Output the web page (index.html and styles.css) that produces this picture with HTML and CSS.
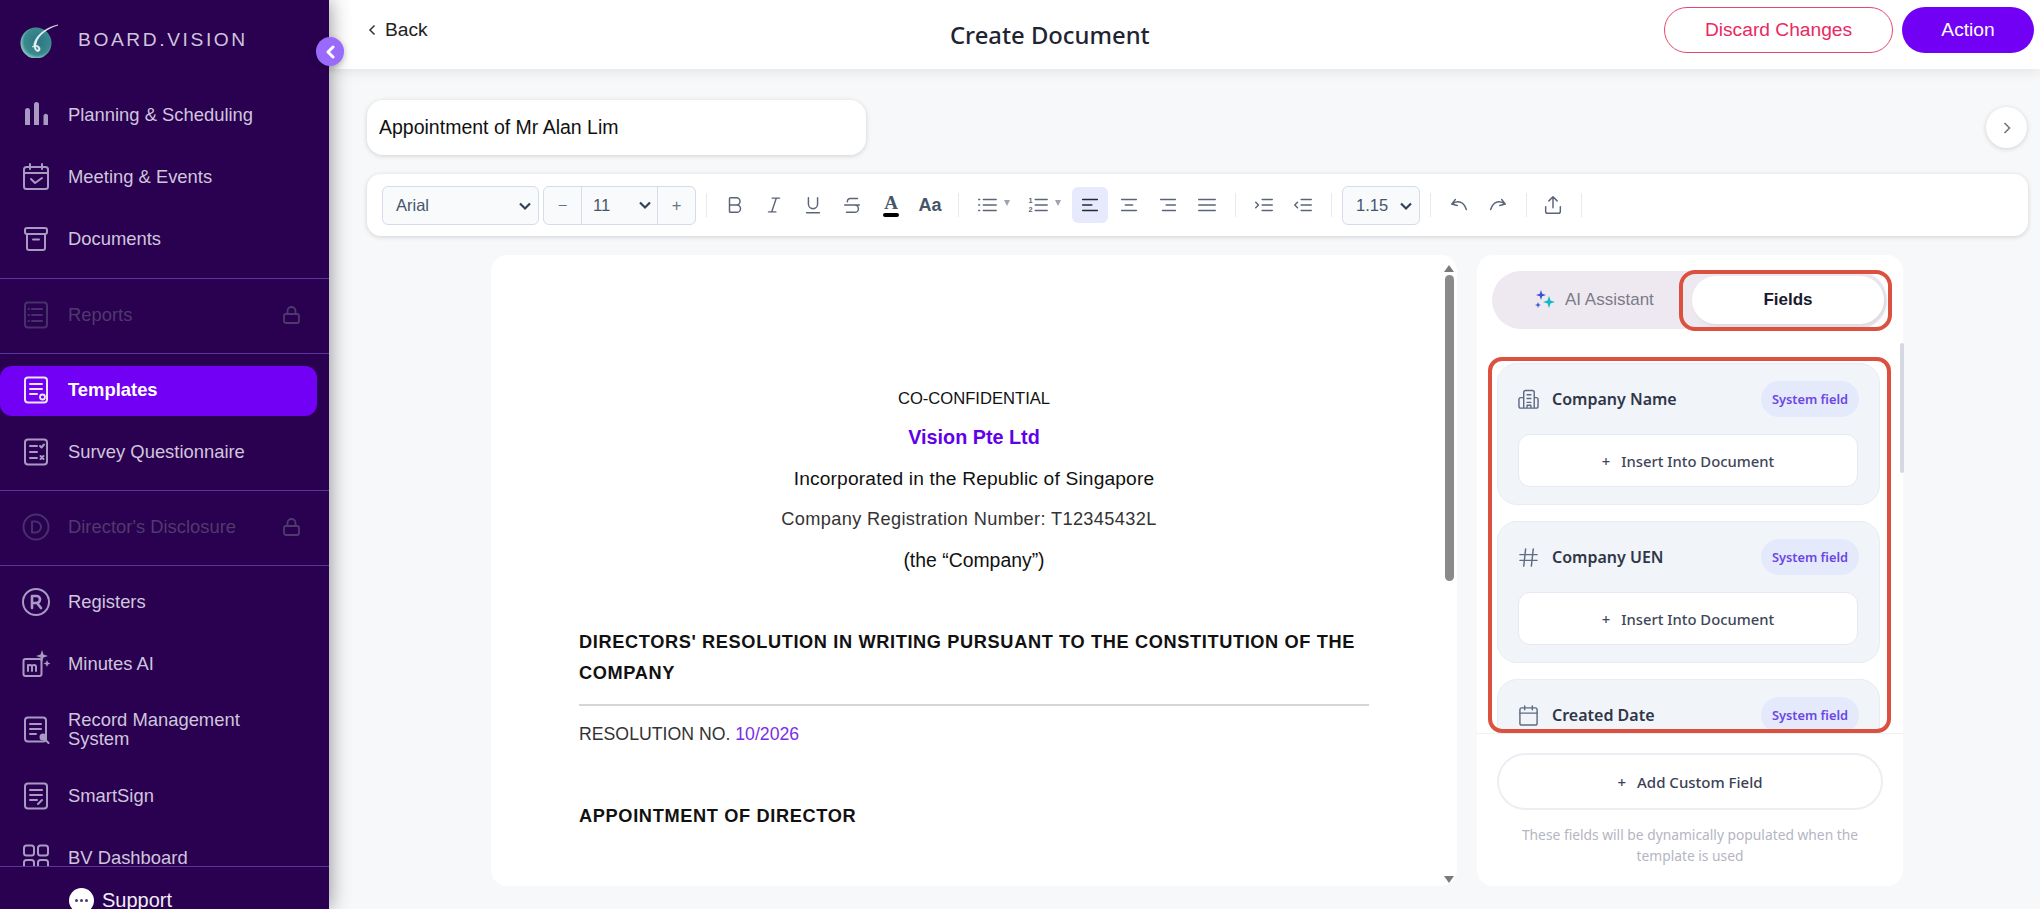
FILE: index.html
```html
<!DOCTYPE html>
<html lang="en">
<head>
    <meta charset="UTF-8">
    <meta name="viewport" content="width=device-width, initial-scale=1.0">
    <title>Create Document</title>
    <link rel="stylesheet" href="styles.css">
</head>
<body>
    <aside class="sidebar">
        <div class="brand">
            <svg class="brand-logo" viewBox="0 0 40 36" width="40" height="36">
                <defs>
                    <radialGradient id="logo-fill" cx="0.55" cy="0.45" r="0.6">
                        <stop offset="0" stop-color="#2c7484"/>
                        <stop offset="0.72" stop-color="#3a8a8e"/>
                        <stop offset="1" stop-color="#a4dccf"/>
                    </radialGradient>
                </defs>
                <circle cx="16" cy="21" r="15.500" fill="url(#logo-fill)"/>
                <path d="M38 3C28 5 18 11 14.500 20c-1.500 4 0 9 3 9.500 2.500.3 3.500-3 1.500-5-2-1.800-5-1.200-7 .5 1.500-.8 4-1.300 5.500 0 1.500 1.500 1 3.200-.2 3-1.500-.3-2-3.500-1-7C18 13 28 6 38 3z" fill="#eaf4f3" stroke="#eaf4f3" stroke-width="0.6"/>
            </svg>
            <span class="brand-name">BOARD.VISION</span>
        </div>
        <nav class="nav">
            <div class="nav-group">
                <a class="nav-item">
                    <svg class="nav-icon" viewBox="0 0 28 28"><path class="fill" d="M3 9.500a2.500 2.500 0 0 1 5 0V24H3zM12 3.500a2.500 2.500 0 0 1 5 0V24h-5zM21.500 14.500a2.300 2.300 0 0 1 4.500 0V24h-4.500z"/></svg>
                    <span>Planning &amp; Scheduling</span>
                </a>
                <a class="nav-item">
                    <svg class="nav-icon" viewBox="0 0 28 28"><rect x="2" y="4" width="24" height="22" rx="2.500"/><path d="M2 10h24M8 1v5M20 1v5M9 16l4 4 7-5"/></svg>
                    <span>Meeting &amp; Events</span>
                </a>
                <a class="nav-item">
                    <svg class="nav-icon" viewBox="0 0 28 28"><rect x="3" y="3" width="22" height="6" rx="2"/><path d="M5 9v14a2 2 0 0 0 2 2h14a2 2 0 0 0 2-2V9M11 14.500h6"/></svg>
                    <span>Documents</span>
                </a>
            </div>
            <div class="nav-group">
                <a class="nav-item locked">
                    <svg class="nav-icon" viewBox="0 0 28 28"><rect x="3" y="1.500" width="22" height="25" rx="3"/><path d="M10 8h10M10 14h10M10 20h10M6.500 8h.5M6.500 14h.5M6.500 20h.5"/></svg>
                    <span>Reports</span>
                    <svg class="lock-icon" viewBox="0 0 18 20"><rect x="1" y="9" width="15" height="9" rx="2"/><path d="M4.500 9V6a4 4 0 0 1 8 0v3"/></svg>
                </a>
            </div>
            <div class="nav-group">
                <a class="nav-item active">
                    <svg class="nav-icon" viewBox="0 0 28 28"><rect x="3" y="1.500" width="22" height="25" rx="3"/><path d="M8 8h12M8 13h12M8 18h7"/><circle class="dot" cx="20.500" cy="21" r="2.500"/></svg>
                    <span>Templates</span>
                </a>
                <a class="nav-item">
                    <svg class="nav-icon" viewBox="0 0 28 28"><rect x="3" y="1.500" width="22" height="25" rx="3"/><path d="M8 8h7M8 14h7M8 20h7M18 8l1.500 1.500L22 6.500M18.500 18l3 3M21.500 18l-3 3"/></svg>
                    <span>Survey Questionnaire</span>
                </a>
            </div>
            <div class="nav-group">
                <a class="nav-item locked">
                    <svg class="nav-icon" viewBox="0 0 28 28"><circle cx="14" cy="14" r="12.500"/><path d="M10 8.500h3.500a5.500 5.500 0 0 1 0 11H10z"/></svg>
                    <span>Director's Disclosure</span>
                    <svg class="lock-icon" viewBox="0 0 18 20"><rect x="1" y="9" width="15" height="9" rx="2"/><path d="M4.500 9V6a4 4 0 0 1 8 0v3"/></svg>
                </a>
            </div>
            <div class="nav-group last">
                <a class="nav-item">
                    <svg class="nav-icon" viewBox="0 0 28 28"><circle cx="14" cy="14" r="13"/><path class="thick" d="M10 20V8h4.500a3.500 3.500 0 0 1 0 7H10M15 15l4 5"/></svg>
                    <span>Registers</span>
                </a>
                <a class="nav-item">
                    <svg class="nav-icon" viewBox="0 0 28 28"><rect x="1.500" y="9" width="18" height="17" rx="2"/><path d="M6 21v-6M6 16.500c0-2 4-2 4 0V21M10 16.500c0-2 4-2 4 0V21"/><path class="fill" d="M20 0l1.500 4.500L26 6l-4.500 1.500L20 12l-1.500-4.500L14 6l4.500-1.500zM25 10l1 2.500 2.500 1-2.500 1-1 2.500-1-2.500-2.500-1 2.500-1z"/></svg>
                    <span>Minutes AI</span>
                </a>
                <a class="nav-item tall">
                    <svg class="nav-icon" viewBox="0 0 28 28"><rect x="3" y="1.500" width="21" height="24" rx="3"/><path d="M8 8h11M8 13h11M8 18h6"/><circle class="fill" cx="21" cy="21" r="3.500"/><path d="M23.500 24l3 3"/></svg>
                    <span>Record Management System</span>
                </a>
                <a class="nav-item">
                    <svg class="nav-icon" viewBox="0 0 28 28"><rect x="3" y="1.500" width="22" height="25" rx="3"/><path d="M8 8h12M8 13h12M8 18h7M16 22l4-4"/></svg>
                    <span>SmartSign</span>
                </a>
                <a class="nav-item">
                    <svg class="nav-icon" viewBox="0 0 28 28"><rect x="2" y="1.500" width="10" height="10" rx="2.500"/><rect x="16" y="1.500" width="10" height="10" rx="2.500"/><rect x="2" y="16" width="10" height="10" rx="2.500"/><rect x="16" y="16" width="10" height="10" rx="2.500"/></svg>
                    <span>BV Dashboard</span>
                </a>
            </div>
        </nav>
        <div class="support">
            <span class="support-bubble"><i></i><i></i><i></i></span>
            <span class="support-label">Support</span>
        </div>
    </aside>

    <button class="collapse-btn">
        <svg viewBox="0 0 12 14" width="12" height="14"><path d="M9 2L4 7l5 5" fill="none" stroke="#fff" stroke-width="3" stroke-linecap="round" stroke-linejoin="round"/></svg>
    </button>

    <main class="main">
        <header class="topbar">
            <a class="back-link">
                <svg viewBox="0 0 10 14" width="10" height="14"><path d="M7.500 2.500L3 7l4.500 4.500" fill="none" stroke="#333" stroke-width="1.500"/></svg>
                Back
            </a>
            <h1 class="page-title">Create Document</h1>
            <div class="topbar-actions">
                <button class="btn btn-outline">Discard Changes</button>
                <button class="btn btn-primary">Action</button>
            </div>
        </header>

        <div class="content">
            <div class="title-row">
                <input class="title-input" type="text" value="Appointment of Mr Alan Lim">
                <button class="round-btn">
                    <svg viewBox="0 0 10 14" width="10" height="14"><path d="M2.500 2l5 5-5 5" fill="none" stroke="#6b7280" stroke-width="1.500"/></svg>
                </button>
            </div>

            <div class="toolbar">
                <div class="tb-select font-family">Arial
                    <svg class="tb-chevron" viewBox="0 0 14 10"><path d="M2 2.500l5 5 5-5"/></svg>
                </div>
                <div class="size-group">
                    <span class="size-step">−</span>
                    <span class="size-value">11
                        <svg class="tb-chevron" viewBox="0 0 14 10"><path d="M2 2.500l5 5 5-5"/></svg>
                    </span>
                    <span class="size-step">+</span>
                </div>
                <span class="tb-sep"></span>
                <button class="tb-btn"><svg viewBox="0 0 24 24"><path d="M6 12h8a4 4 0 0 1 0 8H7a1 1 0 0 1-1-1V5a1 1 0 0 1 1-1h6.500a4 4 0 0 1 0 8"/></svg></button>
                <button class="tb-btn"><svg viewBox="0 0 24 24"><path d="M10 4.500h8M6 19.500h8M14.500 4.500l-5 15"/></svg></button>
                <button class="tb-btn"><svg viewBox="0 0 24 24"><path d="M7 4v7a5 5 0 0 0 10 0V4M5 20.500h14"/></svg></button>
                <button class="tb-btn"><svg viewBox="0 0 24 24"><path d="M18 5H10a3 3 0 0 0-3 3.500M4 12h16M15 12a4 4 0 0 1 0 8H6"/></svg></button>
                <button class="tb-btn color-btn"><span class="color-a">A</span><i class="color-bar"></i></button>
                <button class="tb-btn case-btn">Aa</button>
                <span class="tb-sep"></span>
                <button class="tb-btn list-btn"><svg viewBox="0 0 24 24"><path d="M8 6h14M8 12h14M8 18h14M3 6h1M3 12h1M3 18h1"/></svg><i class="tb-caret"></i></button>
                <button class="tb-btn list-btn"><svg viewBox="0 0 24 24"><path d="M9 6h13M9 12h13M9 18h13"/><text x="1.500" y="10">1</text><text x="1.500" y="20">2</text></svg><i class="tb-caret"></i></button>
                <button class="tb-btn selected"><svg viewBox="0 0 24 24"><path d="M4 6h16M4 12h10M4 18h16"/></svg></button>
                <button class="tb-btn"><svg viewBox="0 0 24 24"><path d="M4 6h16M8 12h8M4 18h16"/></svg></button>
                <button class="tb-btn"><svg viewBox="0 0 24 24"><path d="M4 6h16M10 12h10M6 18h14"/></svg></button>
                <button class="tb-btn"><svg viewBox="0 0 24 24"><path d="M3 6h18M3 12h18M3 18h18"/></svg></button>
                <span class="tb-sep"></span>
                <button class="tb-btn"><svg viewBox="0 0 24 24"><path d="M10 6h11M10 12h11M10 18h11M3 9l3 3-3 3"/></svg></button>
                <button class="tb-btn"><svg viewBox="0 0 24 24"><path d="M10 6h11M10 12h11M10 18h11M6 9l-3 3 3 3"/></svg></button>
                <span class="tb-sep"></span>
                <div class="tb-select line-height">1.15
                    <svg class="tb-chevron" viewBox="0 0 14 10"><path d="M2 2.500l5 5 5-5"/></svg>
                </div>
                <span class="tb-sep"></span>
                <button class="tb-btn"><svg viewBox="0 0 24 24"><path d="M8 6L4 11l6 1.500M4.500 11C9 7 17 7 20 17"/></svg></button>
                <button class="tb-btn"><svg viewBox="0 0 24 24"><path d="M16 6l4 5-6 1.500M19.500 11C15 7 7 7 4 17"/></svg></button>
                <span class="tb-sep tight"></span>
                <button class="tb-btn"><svg viewBox="0 0 24 24"><path d="M12 15V3M7.500 7.500L12 3l4.500 4.500M4 14v5a2 2 0 0 0 2 2h12a2 2 0 0 0 2-2v-5"/></svg></button>
                <span class="tb-sep tight"></span>
            </div>

            <div class="workspace">
                <section class="doc-panel">
                    <div class="doc-page">
                        <p class="doc-center conf">CO-CONFIDENTIAL</p>
                        <p class="doc-center company">Vision Pte Ltd</p>
                        <p class="doc-center incorp">Incorporated in the Republic of Singapore</p>
                        <p class="doc-center reg">Company Registration Number: T12345432L</p>
                        <p class="doc-center the">(the “Company”)</p>
                        <h2 class="doc-heading">DIRECTORS' RESOLUTION IN WRITING PURSUANT TO THE CONSTITUTION OF THE COMPANY</h2>
                        <hr class="doc-rule">
                        <p class="doc-number">RESOLUTION NO. <span>10/2026</span></p>
                        <h3 class="doc-sub">APPOINTMENT OF DIRECTOR</h3>
                    </div>
                    <div class="doc-scroll">
                        <i class="arrow-up"></i>
                        <i class="doc-thumb"></i>
                        <i class="arrow-down"></i>
                    </div>
                </section>

                <section class="side-panel">
                    <div class="tabs">
                        <div class="tab">
                            <svg viewBox="0 0 20 20" width="20" height="20">
                                <path fill="#3b4fd8" d="M6 0l1.200 3.800L11 5 7.200 6.200 6 10 4.800 6.200 1 5l3.800-1.200z"/>
                                <path fill="#14b8c8" d="M14 6l1.500 4.500L20 12l-4.500 1.500L14 18l-1.500-4.500L8 12l4.500-1.500z"/>
                                <path fill="#3b4fd8" d="M3 12l.8 2.200L6 15l-2.200.8L3 18l-.8-2.200L0 15l2.200-.8z"/>
                            </svg>
                            AI Assistant
                        </div>
                        <div class="tab active">Fields</div>
                    </div>
                    <div class="field-list">
                        <div class="field-card">
                            <div class="field-head">
                                <svg class="field-icon" viewBox="0 0 22 22"><path d="M6 20V3.500A2 2 0 0 1 8 1.500h7a2 2 0 0 1 2 2V20M6 9H3a2 2 0 0 0-2 2v7a2 2 0 0 0 2 2h16a2 2 0 0 0 2-2v-7a2 2 0 0 0-2-2h-2M9.500 6h4M9.500 10h4M9.500 14h4M9.500 20v-3h4v3"/></svg>
                                <span class="field-name">Company Name</span>
                                <span class="field-badge">System field</span>
                            </div>
                            <button class="insert-btn"><b>+</b>Insert Into Document</button>
                        </div>
                        <div class="field-card">
                            <div class="field-head">
                                <svg class="field-icon" viewBox="0 0 22 22"><path d="M2 8h18M2 14h18M8 2L6 20M16 2l-2 18"/></svg>
                                <span class="field-name">Company UEN</span>
                                <span class="field-badge">System field</span>
                            </div>
                            <button class="insert-btn"><b>+</b>Insert Into Document</button>
                        </div>
                        <div class="field-card">
                            <div class="field-head">
                                <svg class="field-icon" viewBox="0 0 22 22"><rect x="2" y="3" width="18" height="18" rx="2"/><path d="M2 8.500h18M7 1v4M15 1v4"/></svg>
                                <span class="field-name">Created Date</span>
                                <span class="field-badge">System field</span>
                            </div>
                        </div>
                    </div>
                    <div class="side-footer">
                        <button class="add-btn"><b>+</b>Add Custom Field</button>
                        <p class="side-note">These fields will be dynamically populated when the template is used</p>
                    </div>
                    <i class="field-thumb"></i>
                    <i class="mark mark-tab"></i>
                    <i class="mark mark-list"></i>
                </section>
            </div>
        </div>
    </main>
</body>
</html>
```
FILE: styles.css
```css
* {
    box-sizing: border-box;
}

html, body {
    height: 100%;
}

body {
    margin: 0;
    display: flex;
    overflow: hidden;
    background-color: #f7f8fa;
    color: #111;
    font-family: "Liberation Sans", Arial, sans-serif;
}

button {
    font-family: inherit;
    border: none;
    background: none;
    cursor: pointer;
    padding: 0;
}

/* sidebar */
.sidebar {
    position: relative;
    z-index: 2;
    flex: none;
    width: 329px;
    height: 909px;
    display: flex;
    flex-direction: column;
    background-color: #2a0050;
    box-shadow: 0 0 20px rgba(0, 0, 0, 0.45);
}

.brand {
    flex: none;
    height: 79px;
    display: flex;
    align-items: flex-start;
    padding: 22px 0 0 20px;
    gap: 18px;
}

.brand-logo {
    flex: none;
}

.brand-name {
    margin-top: 7px;
    color: #cfc6dd;
    font-size: 19.2px;
    letter-spacing: 2.6px;
    line-height: 22px;
}

.nav {
    flex: 1;
    min-height: 0;
    overflow: hidden;
}

.nav-group {
    display: flex;
    flex-direction: column;
    gap: 12px;
    padding: 12px 0 12px;
    border-bottom: 1px solid #5b359e;
}

.nav-group:first-child {
    padding-bottom: 13px;
}

.nav-group.last {
    border-bottom: none;
}

.nav-item {
    height: 50px;
    width: 317px;
    display: flex;
    align-items: center;
    gap: 18px;
    padding: 0 16px 4px 22px;
    border-radius: 12px;
    color: #cfc6dd;
    font-size: 18.4px;
    line-height: 19px;
}

.nav-item.tall {
    height: 58px;
}

.nav-item span {
    width: 200px;
}

.nav-icon {
    flex: none;
    width: 28px;
    height: 28px;
    margin-top: 1px;
    fill: none;
    stroke: #a79bc3;
    stroke-width: 2;
    stroke-linecap: round;
    stroke-linejoin: round;
}

.nav-icon .fill {
    fill: #a79bc3;
    stroke: none;
}

.nav-icon .thick {
    stroke-width: 2.6;
}

.nav-icon .dot {
    fill: #7200f5;
    stroke-width: 1.8;
}

.nav-item.active {
    background-color: #7200f5;
    color: #fff;
    font-weight: bold;
}

.nav-item.active .nav-icon {
    stroke: #efe6fb;
}

.nav-item.locked {
    color: #4f3a6e;
}

.nav-item.locked .nav-icon {
    stroke: #46316a;
}

.nav-item.locked span {
    width: auto;
}

.lock-icon {
    flex: none;
    width: 18px;
    height: 20px;
    margin-left: auto;
    margin-top: 2px;
    fill: none;
    stroke: #4f3a6e;
    stroke-width: 1.8;
}

.support {
    flex: none;
    height: 43px;
    display: flex;
    gap: 8px;
    padding: 21px 0 0 69px;
    overflow: hidden;
    border-top: 1px solid #5b359e;
    color: #f1edf6;
    font-size: 20px;
}

.support-label {
    margin-top: 3px;
    line-height: 18px;
}

.support-bubble {
    flex: none;
    width: 25px;
    height: 25px;
    display: flex;
    align-items: center;
    justify-content: center;
    gap: 2px;
    border-radius: 50%;
    background-color: #fff;
}

.support-bubble i {
    width: 3px;
    height: 3px;
    border-radius: 50%;
    background-color: #4a3a7a;
}

.collapse-btn {
    position: absolute;
    z-index: 3;
    left: 316px;
    top: 37px;
    width: 28px;
    height: 29px;
    display: flex;
    align-items: center;
    justify-content: center;
    border-radius: 50%;
    background-color: #9a6bfa;
    box-shadow: 0 2px 6px rgba(0, 0, 0, 0.25);
}

/* main area */
.main {
    flex: 1;
    min-width: 0;
    height: 909px;
    display: flex;
    flex-direction: column;
}

.topbar {
    position: relative;
    z-index: 1;
    flex: none;
    height: 69px;
    display: grid;
    grid-template-columns: 583px auto 1fr;
    padding: 7px 6px 0 38px;
    background-color: #fff;
    box-shadow: 0 1px 14px rgba(0, 0, 0, 0.1);
}

.back-link {
    display: flex;
    align-items: center;
    gap: 8px;
    height: 46px;
    color: #222;
    font-size: 19.2px;
}

.page-title {
    margin: 11px 0 0;
    color: #1f2433;
    font-family: "Noto Sans", sans-serif;
    font-size: 23.8px;
    font-weight: 500;
    line-height: 34px;
}

.topbar-actions {
    display: flex;
    justify-content: flex-end;
    gap: 9px;
}

.btn {
    height: 46px;
    border-radius: 23px;
    font-size: 19.2px;
}

.btn-outline {
    width: 229px;
    border: 1.5px solid #e5486f;
    color: #e9295f;
    background-color: #fff;
}

.btn-primary {
    width: 132px;
    color: #fff;
    background-color: #7200f5;
}

.content {
    flex: 1;
    min-height: 0;
    padding: 31px 12px 0 38px;
}

.title-row {
    display: flex;
    align-items: center;
    justify-content: space-between;
    padding-right: 1px;
}

.title-input {
    width: 499px;
    height: 55px;
    padding: 0 12px;
    border: none;
    outline: none;
    border-radius: 16px;
    background-color: #fff;
    box-shadow: 0 1px 5px rgba(0, 0, 0, 0.16);
    color: #111;
    font-family: inherit;
    font-size: 19.5px;
}

.round-btn {
    width: 41px;
    height: 41px;
    display: flex;
    align-items: center;
    justify-content: center;
    border-radius: 50%;
    background-color: #fff;
    box-shadow: 0 1px 5px rgba(0, 0, 0, 0.16);
}

.toolbar {
    height: 62px;
    margin-top: 19px;
    display: flex;
    align-items: center;
    padding-left: 15px;
    border-radius: 14px;
    background-color: #fff;
    box-shadow: 0 1px 5px rgba(0, 0, 0, 0.16);
}

.tb-select {
    height: 39px;
    display: flex;
    align-items: center;
    justify-content: space-between;
    padding-top: 1px;
    border: 1px solid #d5dbe8;
    border-radius: 6px;
    background-color: #f8fafc;
    color: #475569;
    font-size: 16.5px;
}

.font-family {
    width: 157px;
    padding-left: 13px;
    padding-right: 6px;
    margin-right: 4px;
}

.line-height {
    width: 78px;
    padding-left: 13px;
    padding-right: 6px;
}

.tb-chevron {
    width: 14px;
    height: 10px;
    fill: none;
    stroke: #334155;
    stroke-width: 2.2;
}

.size-group {
    width: 153px;
    height: 39px;
    display: flex;
    border: 1px solid #d5dbe8;
    border-radius: 6px;
    background-color: #f8fafc;
    color: #475569;
    font-size: 16.5px;
}

.size-step {
    width: 37px;
    display: flex;
    align-items: center;
    justify-content: center;
    color: #64748b;
}

.size-value {
    flex: 1;
    display: flex;
    align-items: center;
    gap: 28px;
    padding-left: 11px;
    border-left: 1px solid #d5dbe8;
    border-right: 1px solid #d5dbe8;
}

.tb-sep {
    width: 1px;
    height: 24px;
    margin: 0 10px;
    background-color: #e6e9ef;
}

.tb-sep.tight {
    margin-right: 8px;
}

.tb-btn {
    width: 36px;
    height: 36px;
    margin-right: 3px;
    display: flex;
    align-items: center;
    justify-content: center;
    flex: none;
    border-radius: 6px;
}

.tb-btn + .tb-sep {
    margin-left: 7px;
}

.tb-btn svg {
    width: 22px;
    height: 22px;
    fill: none;
    stroke: #5b6478;
    stroke-width: 1.6;
    stroke-linecap: round;
    stroke-linejoin: round;
}

.tb-btn svg text {
    fill: #5b6478;
    stroke: none;
    font-size: 8px;
    font-weight: bold;
}

.tb-btn.selected {
    background-color: #e7eafd;
}

.tb-btn.selected svg {
    stroke: #222a3a;
}

.color-btn {
    flex-direction: column;
    gap: 1px;
}

.color-a {
    color: #475569;
    font-family: "Liberation Serif", serif;
    font-size: 19px;
    font-weight: bold;
    line-height: 18px;
}

.color-bar {
    width: 16px;
    height: 4px;
    border-radius: 2px;
    background-color: #000;
}

.case-btn {
    color: #475569;
    font-size: 18px;
    font-weight: bold;
}

.list-btn {
    width: 48px;
    justify-content: flex-start;
    gap: 6px;
    padding-left: 7px;
}

.list-btn + .selected {
    margin-left: 1px;
}

.tb-caret {
    width: 0;
    height: 0;
    margin-top: -4px;
    border-left: 3.5px solid transparent;
    border-right: 3.5px solid transparent;
    border-top: 6px solid #9ca3b4;
}

/* document + fields */
.workspace {
    display: flex;
    gap: 20px;
    height: 631px;
    margin: 19px 0 0 124px;
}

.doc-panel {
    position: relative;
    width: 966px;
    flex: none;
    border-radius: 16px;
    background-color: #fff;
}

.doc-page {
    padding: 123px 88px 0;
}

.doc-page p {
    margin: 0;
}

.doc-center {
    height: 41px;
    line-height: 41px;
    text-align: center;
    color: #111;
    font-size: 19.2px;
}

.conf {
    font-size: 16.6px;
}

.doc-page .company {
    margin-top: -2px;
    color: #6200ea;
    font-size: 19.8px;
    font-weight: bold;
}

.incorp {
    letter-spacing: 0.16px;
}

.reg {
    padding-right: 10px;
    color: #333;
    font-size: 18.2px;
    letter-spacing: 0.35px;
}

.the {
    font-size: 19.4px;
}

.doc-heading {
    margin: 46px 0 0;
    font-size: 18.2px;
    line-height: 31px;
    letter-spacing: 0.63px;
}

.doc-rule {
    height: 2px;
    margin: 15px 0 13px;
    border: none;
    background-color: #d6d6d6;
}

.doc-number {
    color: #333;
    font-size: 17.7px;
    line-height: 31px;
}

.doc-number span {
    color: #7a2ee6;
}

.doc-sub {
    margin: 51px 0 0;
    font-size: 18.2px;
    line-height: 31px;
    letter-spacing: 0.65px;
}

.doc-scroll {
    position: absolute;
    top: 10px;
    right: 3px;
    bottom: 3px;
    width: 10px;
    display: flex;
    flex-direction: column;
    align-items: center;
    gap: 3px;
}

.doc-thumb {
    width: 9px;
    height: 306px;
    border-radius: 5px;
    background-color: #8a8a8a;
}

.arrow-up {
    border-left: 5px solid transparent;
    border-right: 5px solid transparent;
    border-bottom: 7px solid #7a7a7a;
}

.arrow-down {
    margin-top: auto;
    border-left: 5px solid transparent;
    border-right: 5px solid transparent;
    border-top: 7px solid #7a7a7a;
}

.side-panel {
    position: relative;
    width: 426px;
    flex: none;
    display: flex;
    flex-direction: column;
    border-radius: 16px;
    background-color: #fff;
}

.tabs {
    flex: none;
    height: 58px;
    margin: 16px 16px 0 15px;
    display: flex;
    align-items: center;
    justify-content: space-between;
    padding-right: 3px;
    border-radius: 29px;
    background-color: #eee9f0;
}

.tab {
    width: 192px;
    height: 48px;
    display: flex;
    align-items: center;
    justify-content: center;
    gap: 10px;
    color: #7c7a88;
    font-size: 17px;
}

.tab:first-child {
    justify-content: flex-start;
    width: 200px;
    padding-left: 43px;
}

.tab.active {
    border-radius: 24px;
    background-color: #fff;
    box-shadow: 2px 2px 4px rgba(0, 0, 0, 0.08);
    color: #1a1a2e;
    font-weight: bold;
}

.field-list {
    flex: 1;
    min-height: 0;
    margin-top: 34px;
    display: flex;
    flex-direction: column;
    gap: 16px;
    padding: 0 23px 0 20px;
    overflow: hidden;
}

.field-card {
    flex: none;
    height: 142px;
    padding: 17px 20px 0 20px;
    border: 1px solid #e8ecf3;
    border-radius: 20px;
    background-color: #f1f4f9;
}

.field-head {
    height: 36px;
    display: flex;
    align-items: center;
    gap: 13px;
}

.field-icon {
    flex: none;
    width: 21px;
    height: 21px;
    fill: none;
    stroke: #5f6b85;
    stroke-width: 1.5;
    stroke-linecap: round;
    stroke-linejoin: round;
}

.field-name {
    color: #2f3648;
    font-family: "Noto Sans", sans-serif;
    font-size: 16px;
    font-weight: 600;
}

.field-badge {
    margin-left: auto;
    width: 98px;
    height: 36px;
    display: flex;
    align-items: center;
    justify-content: center;
    border-radius: 18px;
    background-color: #e4eafc;
    color: #6b46e5;
    font-family: "Noto Sans", sans-serif;
    font-size: 12.8px;
    font-weight: 600;
}

.insert-btn {
    width: 340px;
    height: 53px;
    margin-top: 17px;
    border: 1px solid #e5e9f1;
    border-radius: 12px;
    background-color: #fff;
    color: #3f465a;
    font-family: "Noto Sans", sans-serif;
    font-size: 14.8px;
    font-weight: 500;
}

.insert-btn b,
.add-btn b {
    margin-right: 11px;
    font-weight: 500;
}

.field-thumb {
    position: absolute;
    top: 88px;
    right: -1px;
    width: 4px;
    height: 130px;
    border-radius: 2px;
    background-color: #d5d8e0;
}

.side-footer {
    flex: none;
    height: 153px;
    padding: 19px 20px 0;
    border-top: 1px solid #eef0f3;
}

.add-btn {
    width: 386px;
    height: 57px;
    border: 2px solid #eceef3;
    border-radius: 29px;
    background-color: #fff;
    color: #3a4156;
    font-family: "Noto Sans", sans-serif;
    font-size: 15px;
    font-weight: 500;
}

.side-note {
    width: 386px;
    margin: 15px 0 0;
    color: #b5b5c3;
    font-family: "Noto Sans", sans-serif;
    font-size: 13.8px;
    line-height: 20.5px;
    text-align: center;
}

/* red marks drawn on top of the screenshot */
.mark {
    position: absolute;
    border: 4px solid #dc5040;
    pointer-events: none;
}

.mark-tab {
    left: 202px;
    top: 15px;
    width: 213px;
    height: 61px;
    border-radius: 16px;
}

.mark-list {
    left: 11px;
    top: 102px;
    width: 403px;
    height: 376px;
    border-radius: 14px;
}
```
